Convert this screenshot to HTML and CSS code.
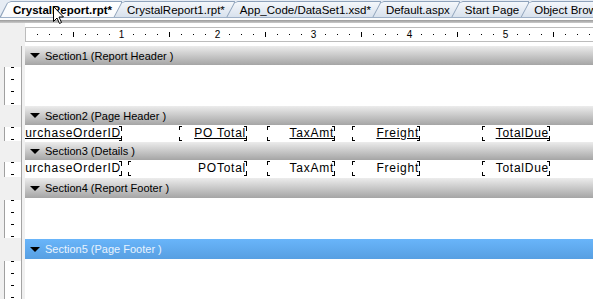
FILE: index.html
```html
<!DOCTYPE html>
<html lang="en">
  <head>
    <meta charset="UTF-8" />
    <title>CrystalReport.rpt</title>
    <link rel="stylesheet" href="styles.css">
  </head>
  <body>
    <div class="tabs">
      <div class="tab active"><span>CrystalReport.rpt*</span></div>
      <div class="tab"><span>CrystalReport1.rpt*</span></div>
      <div class="tab"><span>App_Code/DataSet1.xsd*</span></div>
      <div class="tab"><span>Default.aspx</span></div>
      <div class="tab"><span>Start Page</span></div>
      <div class="tab"><span>Object Browser</span></div>
    </div>
    <div class="tabline"></div>

    <!-- musemarkør over den aktive fane -->
    <svg class="cursor" width="12" height="19" viewBox="0 0 12 19">
      <path d="M0.5 0.5 L0.5 15.5 L4 12 L6.5 17.5 L8.5 16.5 L6 11 L10.5 11 Z" fill="#fff" stroke="#000" stroke-width="1" />
    </svg>

    <div class="designer">
      <div class="gutter plain"></div>
      <div class="ruler-cell">
        <div class="ruler">
          <span class="inch"><b>1</b></span>
          <span class="inch"><b>2</b></span>
          <span class="inch"><b>3</b></span>
          <span class="inch"><b>4</b></span>
          <span class="inch"><b>5</b></span>
        </div>
      </div>

      <!-- Section1 -->
      <div class="gutter"></div>
      <div class="bar">Section1 (Report Header )</div>
      <div class="gutter"><div class="marks"></div></div>
      <div class="band tall"></div>

      <!-- Section2 -->
      <div class="gutter"></div>
      <div class="bar">Section2 (Page Header )</div>
      <div class="gutter"><div class="marks"></div></div>
      <div class="band row">
        <div class="field f-id u">PurchaseOrderID</div>
        <div class="field f-total u">PO Total</div>
        <div class="field f-tax u">TaxAmt</div>
        <div class="field f-freight u">Freight</div>
        <div class="field f-due u">TotalDue</div>
      </div>

      <!-- Section3 -->
      <div class="gutter"></div>
      <div class="bar short">Section3 (Details )</div>
      <div class="gutter"><div class="marks"></div></div>
      <div class="band row details">
        <div class="field f-id">PurchaseOrderID</div>
        <div class="field f-total wide">POTotal</div>
        <div class="field f-tax">TaxAmt</div>
        <div class="field f-freight">Freight</div>
        <div class="field f-due">TotalDue</div>
      </div>

      <!-- Section4 -->
      <div class="gutter"></div>
      <div class="bar big">Section4 (Report Footer )</div>
      <div class="gutter"><div class="marks"></div></div>
      <div class="band tall"></div>

      <!-- Section5 (valgt) -->
      <div class="gutter"></div>
      <div class="bar big selected">Section5 (Page Footer )</div>
      <div class="gutter"><div class="marks"></div></div>
      <div class="band tall"></div>
    </div>
  </body>
</html>
```

FILE: styles.css
```css
* {
  box-sizing: border-box;
}

body {
  margin: 0;
  height: 299px;
  overflow: hidden;
  font-family: "Liberation Sans", Arial, sans-serif;
  background: #fff;
  position: relative;
}

/* faner */
.tabs {
  display: flex;
  height: 18px;
  padding-top: 1px;
  background: #e6ecf4;
  border-bottom: 1px solid #9fb1c7;
  overflow: hidden;
}

.tab {
  flex: none;
  height: 17px;
  margin-left: -9px;
  background: #8fa3bb;
  clip-path: polygon(0 100%, 8px 2px, 12px 0, 100% 0, 100% 100%);
}

.tab:first-child {
  margin-left: -1px;
}

.tab span {
  display: block;
  height: 16px;
  margin: 1px 1px 0 1px;
  padding: 0 9px 0 13px;
  font-size: 11.5px;
  line-height: 16px;
  color: #000;
  white-space: nowrap;
  background: linear-gradient(#f4f7fb, #d6e0ec);
  clip-path: polygon(0 100%, 8px 1px, 11px 0, 100% 0, 100% 100%);
}

.tab.active span {
  font-weight: bold;
  height: 17px;
  background: linear-gradient(#ffffff, #f7f9fc);
}

.tabline {
  height: 5px;
  border-top: 2px solid #fbfcfd;
  background: linear-gradient(#9b9b9b, #c9c9c9);
}

.cursor {
  position: absolute;
  left: 53px;
  top: 6px;
}

/* designer-fladen */
.designer {
  display: grid;
  grid-template-columns: 25px 1fr;
  background: linear-gradient(to right, #f0f0f0 0 21px, #a4a4a4 21px 22px, #f0f0f0 22px 25px, #fff 25px);
}

.gutter.plain {
  background: #f0f0f0;
}

.marks {
  margin: 2px 0 1px 4px;
  width: 17px;
  height: calc(100% - 3px);
  border-left: 1px solid #a0a0a0;
  background-color: #fff;
  background-image: linear-gradient(to bottom, transparent 11px, #000 11px);
  background-size: 3px 12px;
  background-repeat: repeat-y;
  background-position: 6px 1px;
}

.ruler-cell {
  height: 23px;
  padding: 4px 0 0 0;
  background: #fff;
}

.ruler {
  display: flex;
  height: 15px;
  border: 1px solid #bcbcbc;
  border-right: none;
  background-color: #fff;
  background-image:
    linear-gradient(to right, #000 1px, transparent 1px),
    linear-gradient(to right, #000 1px, transparent 1px);
  background-size: 12px 1px, 96px 5px;
  background-position: 11px 6px, 47px 4px;
  background-repeat: repeat-x;
}

.inch {
  flex: none;
  width: 96px;
  display: flex;
  justify-content: flex-end;
}

.inch b {
  width: 7px;
  margin-right: -3px;
  font-weight: normal;
  font-size: 10px;
  line-height: 13px;
  text-align: center;
  background: #fff;
}

.bar {
  height: 19px;
  display: flex;
  align-items: center;
  gap: 5px;
  padding-left: 5px;
  font-size: 11px;
  color: #000;
  background: linear-gradient(#ececec, #a5a5a5);
  white-space: nowrap;
}

.bar::before {
  content: "";
  border-left: 5px solid transparent;
  border-right: 5px solid transparent;
  border-top: 5px solid #000;
}

.bar.short {
  height: 18px;
}

.bar.big {
  height: 20px;
}

.bar.selected {
  color: #e8f3fe;
  background: linear-gradient(#69b5fa, #579fe2);
}

.band {
  background: #fff;
  overflow: hidden;
  min-width: 0;
}

.band.tall {
  height: 41px;
}

.band.row {
  height: 17px;
  display: flex;
  align-items: flex-start;
  padding-top: 1px;
}

.band.details {
  height: 18px;
}

.field {
  flex: none;
  height: 15px;
  padding-right: 1px;
  font-size: 12px;
  line-height: 14px;
  letter-spacing: 0.75px;
  text-align: right;
  white-space: nowrap;
  color: #000;
  background:
    linear-gradient(#000, #000) left top / 3px 1px no-repeat,
    linear-gradient(#000, #000) left top / 1px 4px no-repeat,
    linear-gradient(#000, #000) left bottom / 3px 1px no-repeat,
    linear-gradient(#000, #000) left bottom / 1px 4px no-repeat,
    linear-gradient(#000, #000) right top / 3px 1px no-repeat,
    linear-gradient(#000, #000) right top / 1px 5px no-repeat,
    linear-gradient(#000, #000) right bottom / 3px 1px no-repeat,
    linear-gradient(#000, #000) right bottom / 1px 5px no-repeat;
}

.field.u {
  text-decoration: underline;
}

.f-id {
  margin-left: -40px;
  width: 137px;
}

.f-total {
  margin-left: 57px;
  width: 68px;
}

.f-total.wide {
  margin-left: 6px;
  width: 119px;
}

.f-tax {
  margin-left: 20px;
  width: 68px;
}

.f-freight {
  margin-left: 17px;
  width: 68px;
}

.f-due {
  margin-left: 62px;
  width: 68px;
}
```
